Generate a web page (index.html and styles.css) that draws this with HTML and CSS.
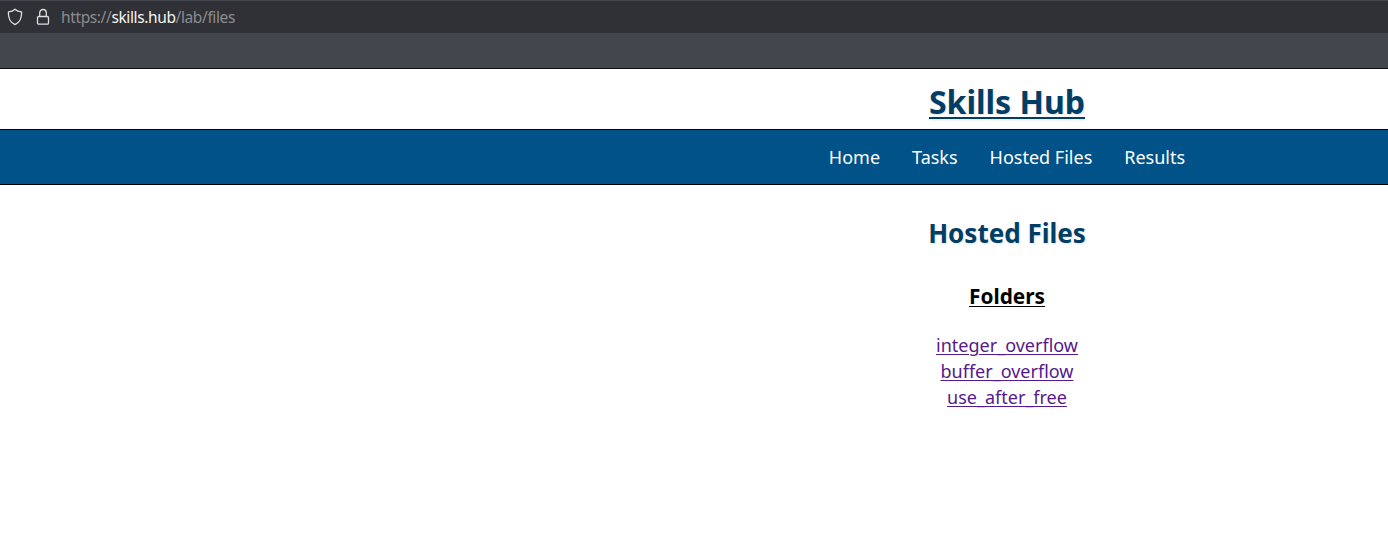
FILE: index.html
```html
<!DOCTYPE html>
<html lang="en">
<head>
<meta charset="utf-8">
<title>Skills Hub</title>
<link rel="stylesheet" href="styles.css">
</head>
<body>
<div class="urlbar">
  <svg class="icon" width="16" height="18" viewBox="0 0 16 18"><path d="M8 1.2 C6.4 2.7 4.1 3.6 1.4 3.9 C1.1 9.6 2.8 14.3 8 16.6 C13.2 14.3 14.9 9.6 14.6 3.9 C11.9 3.6 9.6 2.7 8 1.2 Z"/></svg>
  <svg class="icon lock" width="14" height="18" viewBox="0 0 14 18"><rect x="1.5" y="8.5" width="11" height="7.7" rx="1.3"/><path d="M3.7 8.5 V5 a3.3 3.5 0 0 1 6.6 0 V8.5"/></svg>
  <span class="url">https://<span class="host">skills.hub</span>/lab/files</span>
</div>
<div class="toolbar"></div>
<div class="page">
  <header class="masthead"><h1 class="brand">Skills Hub</h1></header>
  <nav class="nav">
    <a class="nav-link">Home</a>
    <a class="nav-link">Tasks</a>
    <a class="nav-link">Hosted Files</a>
    <a class="nav-link">Results</a>
  </nav>
  <main class="content">
    <h2 class="title">Hosted Files</h2>
    <h3 class="subtitle">Folders</h3>
    <a class="folder">integer_overflow</a>
    <a class="folder">buffer_overflow</a>
    <a class="folder">use_after_free</a>
  </main>
</div>
</body>
</html>
```
FILE: styles.css
```css
* { box-sizing: border-box; }
body {
  margin: 0;
  height: 537px;
  overflow: hidden;
  background: #fff;
  font-family: "Noto Sans", sans-serif;
  font-size: 18px;
}
.urlbar {
  display: flex;
  align-items: center;
  height: 33px;
  padding: 0 0 0 7px;
  border-top: 1px solid #44464d;
  background: #303136;
}
.icon { fill: none; stroke: #dedfda; stroke-width: 1.3; stroke-linejoin: round; }
.lock { margin-left: 13px; }
.url {
  margin-left: 11px;
  color: #8b8b8e;
  font-size: 15.5px;
  line-height: 20px;
  letter-spacing: -0.38px;
  white-space: nowrap;
}
.host { color: #f4f4ee; }
.toolbar { height: 36px; background: #44464e; border-bottom: 1px solid #101014; }
/* Page content is centred right of the viewport's middle. */
.masthead, .nav, .content { padding-left: 626px; }
.masthead { height: 60px; padding-top: 11px; text-align: center; }
.brand, .title { margin: 0; color: #003e66; text-shadow: 1px 1px 2px #e2e2e2; }
.brand { font-size: 32px; line-height: 44px; text-decoration: underline 2px; text-underline-offset: 3px; }
.nav {
  display: flex;
  justify-content: center;
  align-items: center;
  gap: 32px;
  height: 56px;
  border: solid #000;
  border-width: 1px 0;
  background: #005288;
}
.nav-link { color: #fff; line-height: 26px; }
.content { display: flex; flex-direction: column; align-items: center; padding-top: 30px; }
.title { font-size: 26px; line-height: 36px; }
.subtitle {
  margin: 30px 0 21px;
  color: #000;
  font-size: 20.8px;
  line-height: 30px;
  text-decoration: underline 1px;
  text-underline-offset: 2px;
}
.folder {
  color: #551a8b;
  line-height: 26px;
  text-decoration: underline 1px;
  text-underline-offset: 2px;
}
```
